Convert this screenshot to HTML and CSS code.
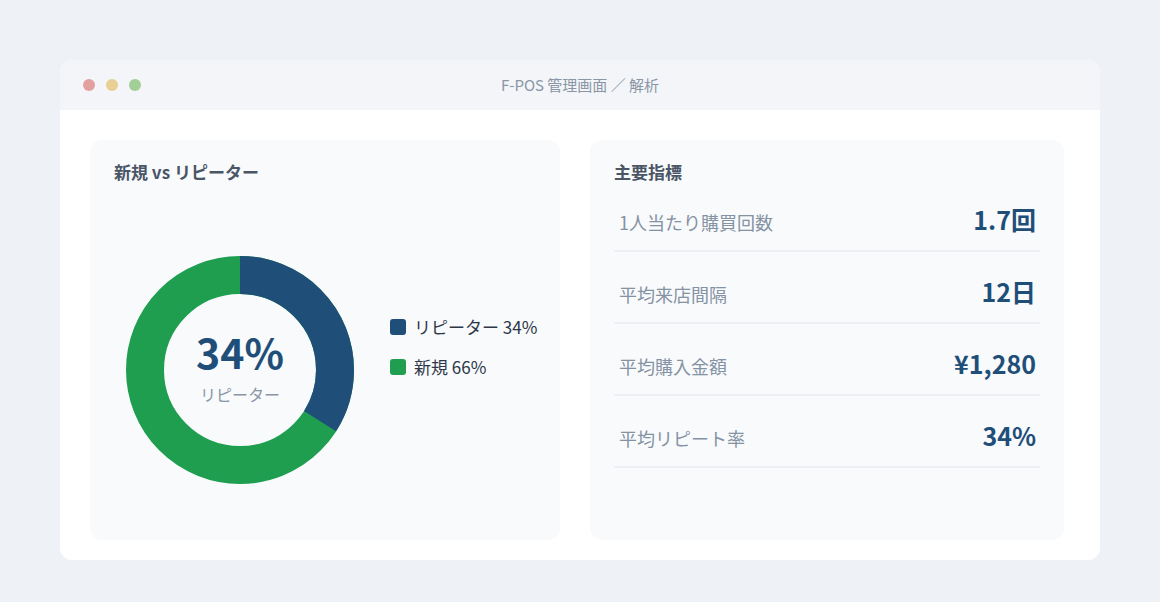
FILE: index.html
```html
<!DOCTYPE html>
<html lang="ja">
<head>
<meta charset="utf-8">
<link rel="stylesheet" href="styles.css">
</head>
<body>
<div class="window">
  <div class="titlebar">
    <div class="dots"><span class="dot red"></span><span class="dot yellow"></span><span class="dot green"></span></div>
    <div class="wtitle">F-POS 管理画面 ／ 解析</div>
  </div>
  <div class="content">
    <section class="card">
      <h2 class="card-title">新規 vs リピーター</h2>
      <div class="chart">
        <div class="donut">
          <svg width="228" height="228" viewBox="0 0 228 228">
            <circle cx="114" cy="114" r="95" fill="none" stroke="#1f9e50" stroke-width="38"/>
            <circle cx="114" cy="114" r="95" fill="none" stroke="#1f4e79" stroke-width="38" stroke-dasharray="202.9 596.9" transform="rotate(-90 114 114)"/>
          </svg>
          <div class="donut-center">
            <div class="big">34%</div>
            <div class="sub">リピーター</div>
          </div>
        </div>
        <ul class="legend">
          <li><span class="sw blue"></span>リピーター 34%</li>
          <li><span class="sw green"></span>新規 66%</li>
        </ul>
      </div>
    </section>
    <section class="card">
      <h2 class="card-title">主要指標</h2>
      <div class="rows">
        <div class="row"><span class="label">1人当たり購買回数</span><span class="value">1.7回</span></div>
        <div class="row"><span class="label">平均来店間隔</span><span class="value">12日</span></div>
        <div class="row"><span class="label">平均購入金額</span><span class="value">¥1,280</span></div>
        <div class="row"><span class="label">平均リピート率</span><span class="value">34%</span></div>
      </div>
    </section>
  </div>
</div>
</body>
</html>
```

FILE: styles.css
```css
* { box-sizing: border-box; }
html, body { margin: 0; padding: 0; }
body {
  background: #eef1f6;
  font-family: "Noto Sans CJK JP", "Noto Sans", sans-serif;
  padding: 60px 60px 42px 60px;
  width: 1160px;
  height: 602px;
}
.window {
  width: 1040px;
  height: 500px;
  background: #ffffff;
  border-radius: 12px;
  overflow: hidden;
}
.titlebar {
  height: 50px;
  background: #f3f5f8;
  position: relative;
  display: flex;
  align-items: center;
  padding-left: 23px;
}
.dots { display: flex; gap: 11px; }
.dot { width: 12px; height: 12px; border-radius: 50%; display: block; }
.dot.red { background: #e4a09f; }
.dot.yellow { background: #e9cf93; }
.dot.green { background: #a1cf95; }
.wtitle {
  position: absolute;
  left: 0; right: 0;
  text-align: center;
  font-size: 15px;
  color: #8a96a6;
  line-height: 50px;
  top: 0;
}
.content {
  display: grid;
  grid-template-columns: 470px 474px;
  column-gap: 30px;
  padding: 30px 36px 20px 30px;
  height: 450px;
}
.card {
  background: #f8fafc;
  border-radius: 12px;
  padding: 24px;
}
.card-title {
  margin: 0;
  font-size: 17px;
  line-height: 16px;
  font-weight: 700;
  color: #4a5566;
}
.chart {
  display: flex;
  align-items: flex-start;
  margin-top: 76px;
  padding-left: 12px;
}
.donut {
  position: relative;
  width: 228px;
  height: 228px;
  flex-shrink: 0;
}
.donut svg { display: block; }
.donut-center {
  position: absolute;
  left: 0; top: 0; right: 0; bottom: 0;
  display: flex;
  flex-direction: column;
  align-items: center;
  justify-content: center;
}
.big {
  font-size: 41px;
  font-weight: 700;
  color: #1f4e79;
  line-height: 48px;
  margin-top: -10px;
}
.sub {
  font-size: 16px;
  color: #8a96a6;
  line-height: 20px;
  margin-top: 9px;
}
.legend {
  list-style: none;
  margin: 59px 0 0 36px;
  padding: 0;
  display: flex;
  flex-direction: column;
  gap: 16px;
  flex-shrink: 0;
}
.legend li {
  display: flex;
  align-items: center;
  font-size: 17px;
  line-height: 24px;
  color: #2d3748;
  white-space: nowrap;
}
.sw {
  width: 16px; height: 16px;
  border-radius: 3px;
  margin-right: 8px;
  display: block;
}
.sw.blue { background: #1f4e79; }
.sw.green { background: #1f9e50; }
.rows { display: flex; flex-direction: column; }
.row {
  height: 72px;
  display: flex;
  justify-content: space-between;
  align-items: center;
  padding: 14px 4px 0 5px;
  border-bottom: 2px solid #eceff3;
}
.label {
  font-size: 18px;
  color: #8592a3;
}
.value {
  font-size: 25px;
  font-weight: 700;
  color: #1f4e79;
  margin-bottom: 7px;
}
```
